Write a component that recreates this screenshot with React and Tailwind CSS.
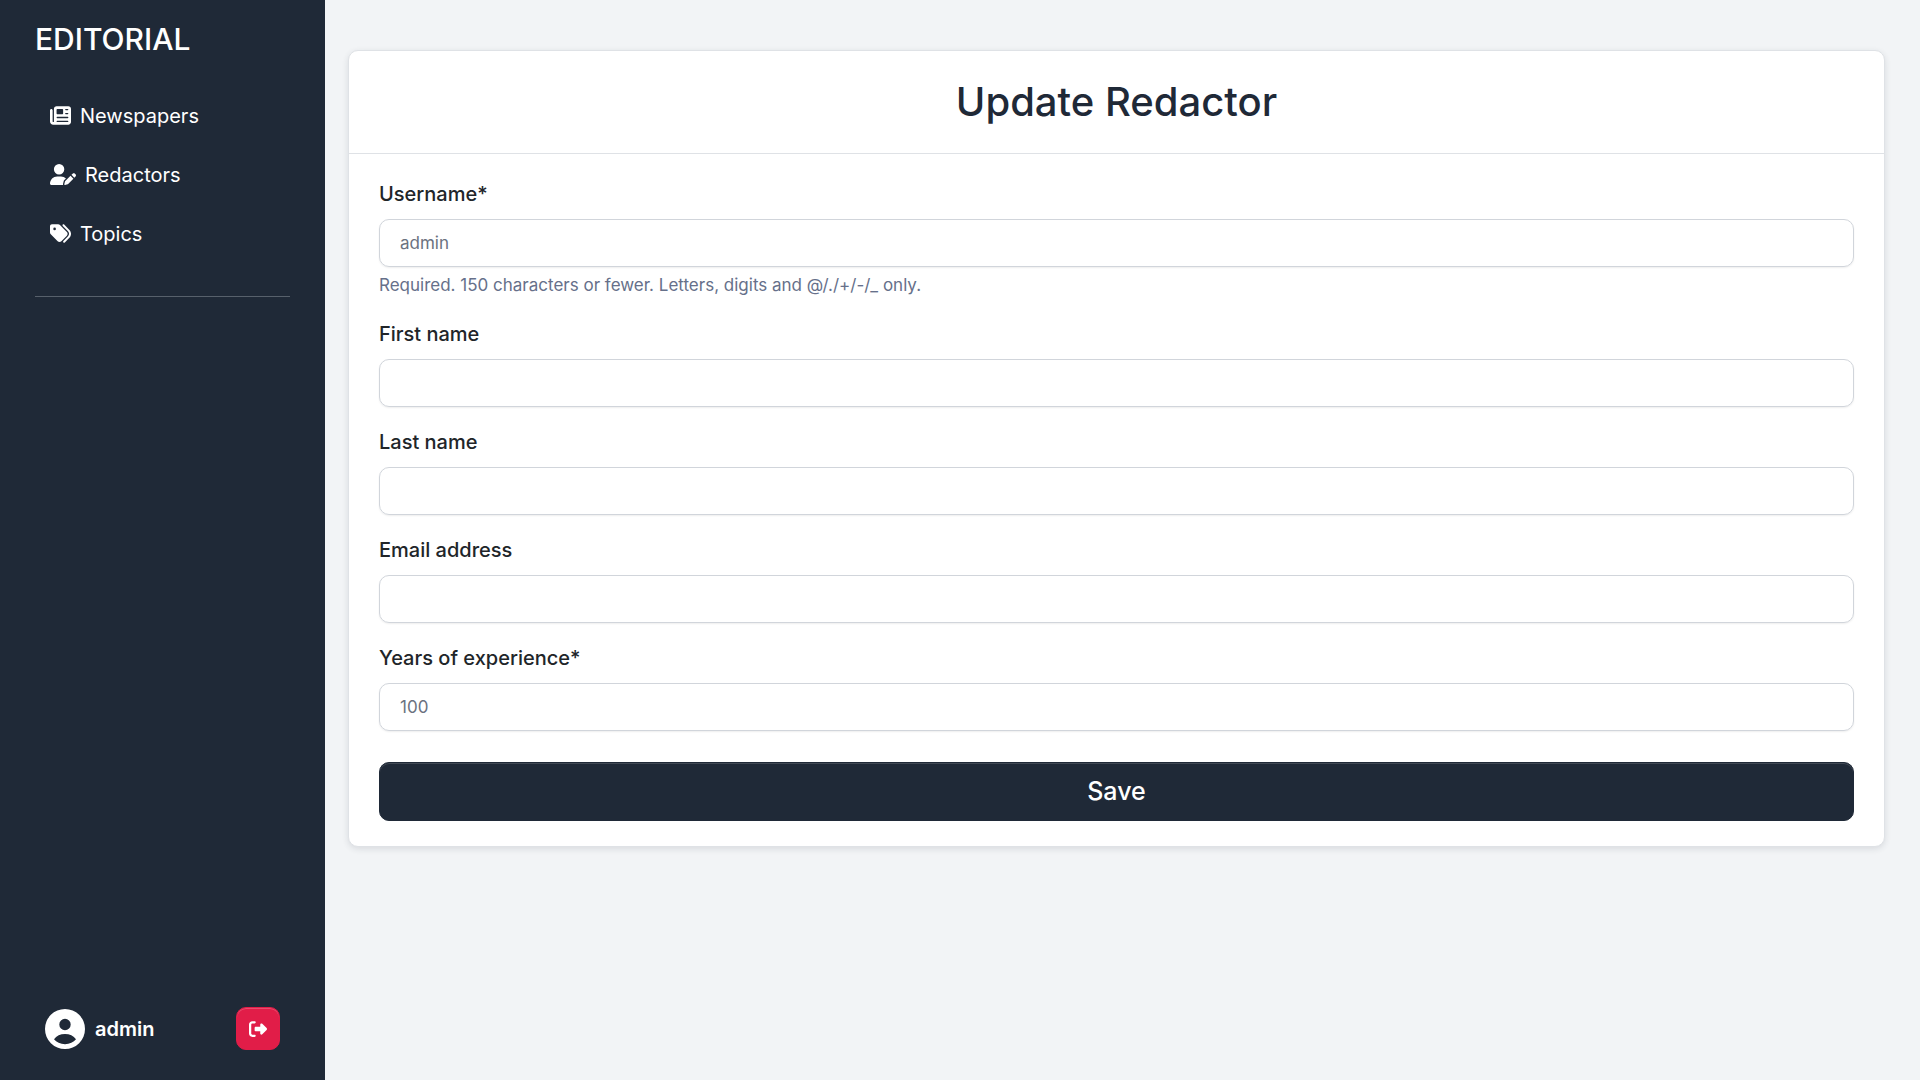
import { FaNewspaper, FaUserPen, FaTags, FaRightFromBracket } from "react-icons/fa6";

const links = [
  { label: "Newspapers", Icon: FaNewspaper, size: "size-[21px]" },
  { label: "Redactors", Icon: FaUserPen, size: "h-[21px] w-[26px]" },
  { label: "Topics", Icon: FaTags, size: "size-[21px]" },
];

const fields = [
  { id: "username", label: "Username*", value: "admin", help: "Required. 150 characters or fewer. Letters, digits and @/./+/-/_ only." },
  { id: "first_name", label: "First name", value: "" },
  { id: "last_name", label: "Last name", value: "" },
  { id: "email", label: "Email address", value: "" },
  { id: "years", label: "Years of experience*", value: "100" },
];

function UserCircle({ className }) {
  return (
    <svg viewBox="0 0 40 40" fill="currentColor" className={className} aria-hidden="true">
      <path
        fillRule="evenodd"
        d="M20 0a20 20 0 1 1 0 40a20 20 0 0 1 0-40ZM20 9.8a5.7 5.7 0 1 0 0 11.4a5.7 5.7 0 0 0 0-11.4ZM9 30.3C11.4 33.3 15.4 35.2 20 35.2C24.6 35.2 28.6 33.3 31 30.3C28.6 26.9 24.6 25 20 25C15.4 25 11.4 26.9 9 30.3Z"
      />
    </svg>
  );
}

function Sidebar() {
  return (
    <aside className="flex w-[325px] shrink-0 flex-col bg-[#1f2937] px-[35px] text-white">
      <a href="#" className="mt-5 text-[30px] leading-[38px] font-medium">EDITORIAL</a>
      <nav className="mt-7 flex flex-col">
        {links.map(({ label, Icon, size }) => (
          <a key={label} href="#" className="flex h-[59px] items-center gap-[9px] px-[15px] text-xl font-normal">
            <Icon className={size} />
            {label}
          </a>
        ))}
      </nav>
      <hr className="mt-[33px] border-[#57606b]" />
      <div className="mt-auto mb-[30px] flex items-center px-2.5">
        <a href="#" className="flex items-center gap-2.5 text-xl font-semibold">
          <UserCircle className="size-10" />
          admin
        </a>
        <button type="button" aria-label="Log out" className="ml-auto flex h-[43px] w-11 items-center justify-center rounded-[10px] border border-[#e11d48] bg-[#e11d48] inset-shadow-[0_1px_0_#e84c6d]">
          <FaRightFromBracket className="size-[18px]" />
        </button>
      </div>
    </aside>
  );
}

export default function App() {
  return (
    <div className="flex min-h-screen bg-[#f2f4f6] font-['Inter',sans-serif]">
      <Sidebar />
      <main className="flex-1 pt-[50px] pr-[35px] pl-[23px]">
        <section className="rounded-[10px] border border-[#dfe2e6] bg-white shadow-[0_2px_6px_rgba(31,41,55,0.12)]">
          <header className="flex h-[103px] items-center justify-center border-b border-[#dfe2e6]">
            <h1 className="text-[40px] font-medium text-[#1f2937]">Update Redactor</h1>
          </header>
          <form className="px-[30px] pt-[25px] pb-[25px]">
            {fields.map((f) => (
              <div key={f.id} className="mb-5">
                <label htmlFor={f.id} className="mb-2.5 block text-xl leading-[30px] font-medium text-[#212529]">{f.label}</label>
                <input id={f.id} defaultValue={f.value} className="block h-12 w-full rounded-[10px] border border-[#d1d5db] px-5 text-[17px] text-[#6b7280] shadow-[0_1px_2px_rgba(0,0,0,0.07)]" />
                {f.help && <p className="mt-1 text-[17px] leading-7 text-[#66708a]">{f.help}</p>}
              </div>
            ))}
            <button type="submit" className="mt-[31px] block h-[59px] w-full rounded-[10px] border border-[#1f2937] bg-[#1f2937] text-[25px] font-medium text-white inset-shadow-[0_1px_0_#414954]">Save</button>
          </form>
        </section>
      </main>
    </div>
  );
}
